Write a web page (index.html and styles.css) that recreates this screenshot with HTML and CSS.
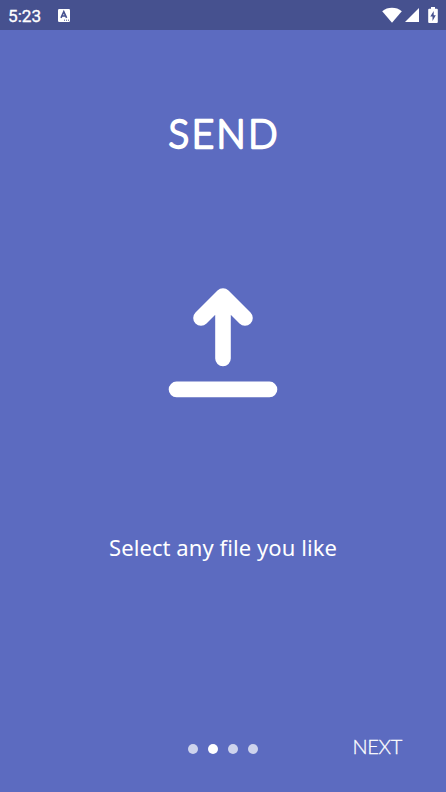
FILE: index.html
```html
<!DOCTYPE html>
<html lang="en">
<head>
    <meta charset="UTF-8">
    <meta name="viewport" content="width=device-width, initial-scale=1.0">
    <title>Send</title>
    <link rel="stylesheet" href="styles.css">
</head>
<body>
    <div class="status-bar">
        <span class="time">5:23</span>
        <svg class="app-icon" width="12" height="13" viewBox="0 0 12 13">
            <rect width="12" height="13" rx="1.2" fill="#fff"/>
            <path d="M3 8.8 L5.8 2.6 L8.6 8.8 M4.2 7 H7.6" fill="none" stroke="#46518f" stroke-width="1.6"/>
            <path d="M6 11.2h1M8 11.2h1M10 11.2h1" stroke="#46518f"/>
        </svg>
        <div class="status-icons">
            <svg width="20" height="16" viewBox="0 0 20 16">
                <path d="M0.2 4.2C5.5-0.4 14.5-0.4 19.8 4.2L10 15.8z" fill="#fff"/>
            </svg>
            <svg class="signal" width="14" height="14" viewBox="0 0 14 14">
                <path d="M14 0V14H0z" fill="#fff"/>
            </svg>
            <svg class="battery" width="10" height="16" viewBox="0 0 10 16">
                <path d="M3 0h4v1.7h1.8q1 0 1 1V15q0 1-1 1H1.2q-1 0-1-1V2.7q0-1 1-1H3z" fill="#fff"/>
                <path d="M5.7 4L2.3 9.6H4.5V14L7.8 8.2H5.7z" fill="#46518f"/>
            </svg>
        </div>
    </div>

    <div class="slide">
        <!-- svg text so the letters get rounded corners -->
        <svg class="title" width="140" height="50" viewBox="0 0 140 50">
            <text x="70" y="38.8" text-anchor="middle" textLength="109">SEND</text>
        </svg>
        <svg class="upload" width="110" height="110" viewBox="0 0 110 110">
            <path d="M33 30L55 8L77 30M55 10V70.5M8.5 101.4H101.5" fill="none" stroke="#fff" stroke-width="15.6" stroke-linecap="round" stroke-linejoin="round"/>
        </svg>
        <p class="description">Select any file you like</p>
    </div>

    <div class="footer">
        <div class="dots">
            <span class="dot"></span>
            <span class="dot active"></span>
            <span class="dot"></span>
            <span class="dot"></span>
        </div>
        <button class="next">NEXT</button>
    </div>
</body>
</html>
```
FILE: styles.css
```css
body {
    margin: 0;
    height: 100vh;
    display: flex;
    flex-direction: column;
    overflow: hidden;
    background-color: #5c6bc0;
    color: white;
    font-family: Lato, sans-serif;
}

.status-bar {
    display: flex;
    align-items: center;
    height: 30px;
    padding: 0 8px;
    box-sizing: border-box;
    background-color: #46518f;
}

.time {
    width: 50px;
    padding-top: 1px;
    font-family: Roboto, sans-serif;
    font-size: 17.2px;
    font-weight: 400;
    line-height: 20px;
    -webkit-text-stroke: 0.3px white;
}

.status-icons {
    display: flex;
    align-items: center;
    margin-left: auto;
}

.signal {
    margin-left: 3px;
}

.battery {
    margin-left: 9px;
}

.slide {
    flex: 1;
    display: flex;
    flex-direction: column;
    align-items: center;
}

.title {
    margin-top: 79px;
    fill: white;
    stroke: white;
    stroke-width: 2.3px;
    stroke-linejoin: round;
    font-size: 38.5px;
    font-weight: 300;
}

.upload {
    margin-top: 129px;
}

.description {
    margin: 133px 0 0;
    font-family: "Noto Sans", sans-serif;
    font-size: 22px;
    line-height: 32px;
    letter-spacing: 0.08px;
    white-space: nowrap;
}

/* Page dots stay centred, button sits on the right */
.footer {
    display: grid;
    grid-template-columns: 1fr auto 1fr;
    align-items: center;
    height: 87px;
}

.dots {
    grid-column: 2;
    display: flex;
    gap: 10px;
}

.dot {
    width: 10px;
    height: 10px;
    border-radius: 50%;
    background-color: #ced3ec;
}

.dot.active {
    background-color: white;
}

.next {
    justify-self: end;
    margin-right: 44px;
    padding: 0 0 5px;
    border: none;
    background: none;
    color: white;
    font-family: Lato, sans-serif;
    font-size: 20px;
    font-weight: 300;
    line-height: 24px;
    letter-spacing: -0.3px;
    -webkit-text-stroke: 0.3px white;
}
```
